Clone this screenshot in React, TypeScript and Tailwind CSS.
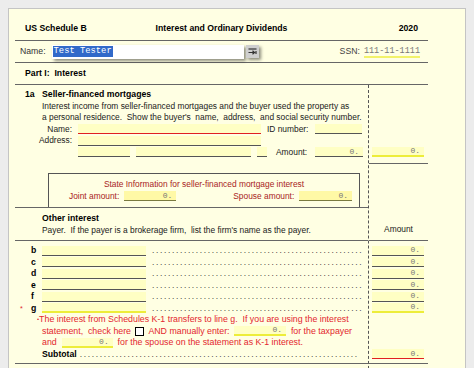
import React from 'react';

type FieldProps = {
  className?: string;
  value?: string;
};

// yellow entry box, underline colour passed in className
const Field: React.FC<FieldProps> = ({ className = '', value }) => (
  <div
    className={`flex h-[10px] items-center justify-end pr-[4px] font-['Liberation_Mono',monospace] text-[8px] leading-none text-[#777] ${className}`}
  >
    {value}
  </div>
);

const Dots: React.FC<{ count: number; className?: string }> = ({ count, className = '' }) => (
  <span className={`whitespace-nowrap tracking-[1.66px] text-[#444] ${className}`}>
    {'.'.repeat(count)}
  </span>
);

const App: React.FC = () => {
  const payers = ['b', 'c', 'd', 'e', 'f'];

  return (
    <div className="h-[368px] w-[474px] overflow-hidden bg-[#ececec] pl-[8px] pt-[8px] font-['Liberation_Sans',Arial,sans-serif] text-[8.4px] leading-[11.5px] text-[#1a1a1a]">
      <div className="h-[400px] w-[458px] border border-[#c4c4c4] bg-[#ffffe3]">
        <div className="w-[419px] pl-[6px]">
          {/* Header */}
          <div className="flex h-[32px] items-center border-b border-[#666] pt-[8px] text-[8.7px] font-bold text-black">
            <div className="flex-1 pl-[10px]">US Schedule B</div>
            <div>Interest and Ordinary Dividends</div>
            <div className="flex-1 pr-[10px] text-right">2020</div>
          </div>

          {/* Name / SSN */}
          <div className="flex h-[22px] items-center border-b border-[#666] pr-[8px] text-[8.7px]">
            <span className="pl-[5px] text-[#333]">Name:</span>
            <div className="ml-[6px] flex h-[14px] w-[192px] items-center bg-white pl-[1px] shadow-[2px_2px_3px_rgba(0,0,0,0.45)]">
              <span className="bg-[#3169c9] px-[1px] font-['Liberation_Mono',monospace] text-[8.8px] leading-[11px] text-white">
                Test Tester
              </span>
            </div>
            <div className="ml-[2px] flex h-[13px] w-[13px] items-center justify-center bg-[#cfcfcf] shadow-[2px_2px_3px_rgba(0,0,0,0.45)]">
              <svg width="11" height="11" viewBox="0 0 11 11" fill="none" stroke="#333" strokeWidth="1.2">
                <path d="M1.5 3h8" />
                <path d="M1.5 6.5h6M5.5 4.8l2 1.7-2 1.7M9 5v3" />
              </svg>
            </div>
            <span className="ml-auto text-[#444]">SSN:</span>
            <span className="ml-[4px] border-b-2 border-[#f2f26a] font-['Liberation_Mono',monospace] text-[8.5px] leading-[10px] text-[#777]">
              111-11-1111
            </span>
          </div>

          {/* Part I */}
          <div className="flex h-[22px] items-center whitespace-pre border-b border-[#666] pl-[10px] text-[8.7px] font-bold text-black">
            Part I:  Interest
          </div>

          {/* Body */}
          <div className="flex">
            {/* left column */}
            <div className="w-[353px]">
              <div className="h-[123px] border-b border-[#666] pt-[4px]">
                <div className="flex h-[11.5px] items-center pl-[10px] text-[8.7px] font-bold text-black">
                  <span className="w-[17px]">1a</span>
                  <span>Seller-financed mortgages</span>
                </div>
                <div className="h-[11.5px] pl-[27px]">
                  Interest income from seller-financed mortgages and the buyer used the property as
                </div>
                <div className="h-[11.5px] whitespace-pre pl-[27px]">
                  a personal residence.  Show the buyer's  name,  address,  and social security number.
                </div>
                <div className="flex h-[11.5px] items-center">
                  <span className="w-[57px] text-right">Name:</span>
                  <Field className="ml-[6px] w-[183px] border-b border-[#e02020] bg-[#ffffc4]" />
                  <span className="ml-[6px]">ID number:</span>
                  <Field className="ml-auto mr-[6px] w-[47px] border-b border-[#555] bg-[#ffffc4]" />
                </div>
                <div className="flex h-[11.5px] items-center">
                  <span className="w-[57px] text-right">Address:</span>
                  <Field className="ml-[6px] w-[183px] border-b border-[#555] bg-[#ffffc4]" />
                </div>
                <div className="flex h-[11.5px] items-center">
                  <Field className="ml-[63px] w-[52px] border-b border-[#555] bg-[#ffffc4]" />
                  <Field className="ml-[6px] w-[115px] border-b border-[#555] bg-[#ffffc4]" />
                  <Field className="ml-[6px] w-[10px] border-b border-[#555] bg-[#ffffc4]" />
                  <span className="ml-[9px]">Amount:</span>
                  <Field className="ml-auto mr-[5px] w-[48px] border-b border-[#555] bg-[#ffffc4]" value="0." />
                </div>

                {/* state info box */}
                <div className="ml-[33px] mt-[15px] h-[34px] w-[312px] border border-b-0 border-[#555] pt-[5px] text-[#a82424]">
                  <div className="h-[11.5px] text-center">
                    State Information for seller-financed mortgage interest
                  </div>
                  <div className="flex h-[11.5px] items-center pl-[20px]">
                    <span>Joint amount:</span>
                    <Field className="ml-[5px] w-[52px] border-b border-[#7a7a40] bg-[#fff9a6]" value="0." />
                    <span className="ml-[57px]">Spouse amount:</span>
                    <Field className="ml-auto mr-[7px] w-[53px] border-b border-[#7a7a40] bg-[#fff9a6]" value="0." />
                  </div>
                </div>
              </div>

              <div className="h-[33px] border-b border-[#666] pl-[27px] pt-[5px]">
                <div className="h-[11.5px] text-[8.7px] font-bold text-black">Other interest</div>
                <div className="h-[11.5px] whitespace-pre">
                  Payer.  If the payer is a brokerage firm,  list the firm's name as the payer.
                </div>
              </div>

              <div className="h-[123px] border-b border-[#666] pb-[3px] pt-[4px]">
                {payers.map((l) => (
                  <div key={l} className="flex h-[11.5px] items-center">
                    <span className="w-[15px]" />
                    <span className="w-[12px] pl-[1px] text-[8.7px] font-bold text-black">{l}</span>
                    <Field className="w-[104px] border-b border-[#555] bg-[#ffffc4]" />
                    <Dots count={53} className="ml-[6px]" />
                  </div>
                ))}
                <div className="flex h-[11.5px] items-center">
                  <span className="w-[15px] pl-[5px] text-[7px] text-[#e0262c]">*</span>
                  <span className="w-[12px] pl-[1px] text-[8.7px] font-bold text-black">g</span>
                  <Field className="w-[104px] border-b-2 border-[#eded3a] bg-[#ffffc4]" />
                  <Dots count={53} className="ml-[6px]" />
                </div>
                <div className="flex h-[11.5px] items-center whitespace-pre pl-[22px] text-[8.8px] text-[#e3262e]">
                  <span className="text-[6px]">•</span>
                  The interest from Schedules K-1 transfers to line g.  If you are using the interest
                </div>
                <div className="flex h-[11.5px] items-center whitespace-pre pl-[27px] text-[8.8px] text-[#e3262e]">
                  <span>statement,  check here </span>
                  <span className="mx-[2px] h-[9px] w-[9px] border-[1.5px] border-black bg-white" />
                  <span> AND manually enter: </span>
                  <Field className="ml-[2px] w-[52px] border-b-2 border-[#eded3a] bg-[#ffffc4]" value="0." />
                  <span>  for the taxpayer</span>
                </div>
                <div className="flex h-[11.5px] items-center whitespace-pre pl-[27px] text-[8.8px] text-[#e3262e]">
                  <span>and</span>
                  <Field className="ml-[5px] w-[51px] border-b-2 border-[#eded3a] bg-[#ffffc4]" value="0." />
                  <span>  for the spouse on the statement as K-1 interest.</span>
                </div>
                <div className="flex h-[11.5px] items-center pl-[27px]">
                  <span className="text-[8.7px] font-bold text-black">Subtotal</span>
                  <Dots count={70} className="ml-[3px]" />
                </div>
              </div>
            </div>

            {/* right column */}
            <div className="w-[60px] border-l border-dashed border-[#555]">
              <div className="flex h-[79px] flex-col justify-end border-b border-[#666] pb-[6px]">
                <Field className="ml-[3px] w-[52px] border-b-2 border-[#eded3a] bg-[#ffffc4]" value="0." />
              </div>
              <div className="flex h-[77px] flex-col justify-end border-b border-[#666] pb-[5px]">
                <div className="h-[11.5px] text-center">Amount</div>
              </div>
              <div className="h-[123px] border-b border-[#666] pb-[3px] pt-[4px]">
                {payers.map((l) => (
                  <div key={l} className="flex h-[11.5px] items-center">
                    <Field className="ml-[3px] w-[52px] border-b border-[#555] bg-[#ffffc4]" value="0." />
                  </div>
                ))}
                <div className="flex h-[11.5px] items-center">
                  <Field className="ml-[3px] w-[52px] border-b-2 border-[#eded3a] bg-[#ffffc4]" value="0." />
                </div>
                <div className="h-[34.5px]" />
                <div className="flex h-[11.5px] items-center">
                  <Field className="ml-[3px] w-[52px] border-b border-[#e02020] bg-[#ffffc4]" value="0." />
                </div>
              </div>
              <div className="h-[20px]" />
            </div>
          </div>
        </div>
      </div>
    </div>
  );
};

export default App;
